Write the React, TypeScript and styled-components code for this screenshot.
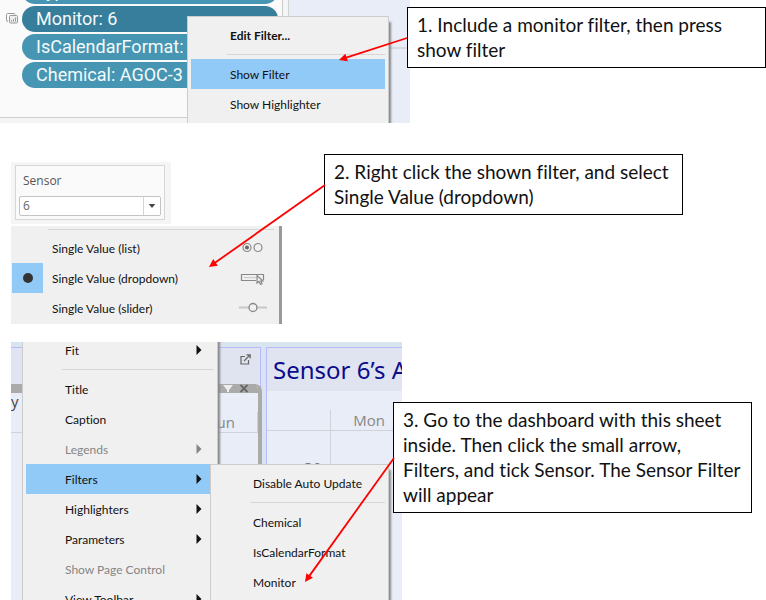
import React from 'react';
import styled, { createGlobalStyle } from 'styled-components';

const Global = createGlobalStyle`
  * { box-sizing: border-box; }
  body { margin: 0; background: #fff; color: #111; font-family: "Open Sans", "Noto Sans", sans-serif; font-variant-ligatures: none; }
  button { font: inherit; color: inherit; border: 0; margin: 0; padding: 0; background: none; text-align: left; }
`;

const Page = styled.main`
  display: grid;
  grid-template-rows: 123px 181px minmax(0, 1fr);
  row-gap: 19px;
  height: 100vh;
  overflow: hidden;
`;

const Step = styled.section<{ $indent?: number }>`
  position: relative;
  display: flex;
  align-items: flex-start;
  min-width: 0;
  padding-left: ${p => p.$indent ?? 0}px;
`;

const Callout = styled.p<{ $top: number; $gap: number }>`
  flex: 0 1 359px;
  margin: ${p => p.$top}px 0 0 ${p => p.$gap}px;
  padding: 4px 9px 5px;
  border: 1px solid #000;
  background: #fff;
  position: relative;
  font-family: Lato, sans-serif;
  font-size: 19px;
  line-height: 25px;
`;

const ArrowLayer = styled.svg`
  position: absolute;
  left: 0;
  top: 0;
  pointer-events: none;
  overflow: visible;
`;

function Arrow({ from, to }: { from: [number, number]; to: [number, number] }) {
  const angle = (Math.atan2(to[1] - from[1], to[0] - from[0]) * 180) / Math.PI;
  const len = Math.hypot(to[0] - from[0], to[1] - from[1]);
  return (
    <ArrowLayer width="1" height="1" aria-hidden="true">
      <g transform={`translate(${from[0]} ${from[1]}) rotate(${angle})`} fill="#f00">
        <path d={`M0 0H${len - 6}`} stroke="#f00" strokeWidth="1.8" />
        <path d={`M${len} 0l-8 -4v8z`} />
      </g>
    </ArrowLayer>
  );
}

/* Menus */
const MenuBox = styled.div`
  display: flex;
  flex-direction: column;
  padding: 3px;
  background: #f0f0f0;
  border: 1px solid #ccc;
  box-shadow: 3px 5px 2px -1px #888;
  font-family: Lato, sans-serif;
  font-size: 12px;
`;

const MenuItem = styled.button<{ $active?: boolean; $bold?: boolean }>`
  display: flex;
  flex: none;
  align-items: center;
  justify-content: space-between;
  height: 30px;
  padding: 0 9px 0 39px;
  background: ${p => (p.$active ? '#91c9f7' : 'transparent')};
  font-weight: ${p => (p.$bold ? 700 : 400)};
  white-space: nowrap;
  &:disabled { color: #858585; }
`;

const Rule = styled.hr`
  flex: none;
  width: auto;
  height: 1px;
  margin: 4px 0 4px 36px;
  border: 0;
  background: #d7d7d7;
`;

const Caret = () => (
  <svg width="6" height="10" viewBox="0 0 6 10" fill="currentColor" aria-hidden="true">
    <path d="M0.5 0L5.5 5L0.5 10z" />
  </svg>
);

/* Step 1 */
const ShelfShot = styled.div`
  position: relative;
  display: flex;
  flex: none;
  width: 410px;
  height: 123px;
  overflow: hidden;
  background: #e9edf7;
`;

const Shelf = styled.div`
  width: 289px;
  height: 123px;
  border-right: 1px solid #d2d2d2;
  background: #f5f5f5;
`;

const ShelfCard = styled.div`
  display: flex;
  gap: 4px;
  width: 283px;
  height: 118px;
  padding-left: 6px;
  border: solid #ccc;
  border-width: 0 1px 1px 0;
  background: #fafafa;
`;

const SheetsIcon = styled.svg`
  flex: none;
  margin-top: 13px;
`;

const Pills = styled.div`
  display: flex;
  flex: 1;
  flex-direction: column;
  gap: 2px;
  margin: -22px 4px 0 0;
`;

const Pill = styled.button<{ $selected?: boolean }>`
  flex: none;
  height: 26px;
  padding: 0 14px;
  overflow: hidden;
  border-radius: 13px;
  background: ${p => (p.$selected ? '#367e9b' : '#4696b3')};
  color: #f4fafc;
  font-family: Roboto, sans-serif;
  font-size: 18px;
  line-height: 26px;
  white-space: nowrap;
`;

const PlotEdge = styled.div`
  flex: 1;
  height: 49px;
  border-bottom: 2px solid #d7dae2;
`;

const FilterMenu = styled(MenuBox)`
  position: absolute;
  left: 187px;
  top: 16px;
  width: 202px;
  height: 120px;
`;

/* Step 2 */
const DropdownShot = styled.div`
  display: flex;
  flex: none;
  flex-direction: column;
  gap: 2px;
  width: 271px;
  margin-top: 20px;
`;

const FilterFrame = styled.div`
  width: 160px;
  height: 62px;
  padding: 3px 6px 4px 4px;
  background: #f5f5f5;
`;

const FilterCard = styled.div`
  display: flex;
  flex-direction: column;
  height: 55px;
  padding: 0 3px 3px;
  border: 1px solid #d6d6d6;
  background: #fafafa;
`;

const FilterLabel = styled.label`
  padding-left: 4px;
  color: #555;
  font-size: 12px;
  line-height: 30px;
`;

const SelectWrap = styled.div`
  display: grid;
  grid-template-columns: 1fr 17px;
  align-items: center;
  height: 20px;
  border: 1px solid #c4c4c4;
  border-radius: 2px;
  background: #fff;
`;

const Select = styled.select`
  grid-area: 1 / 1 / 2 / 3;
  width: 100%;
  height: 18px;
  padding: 0 3px;
  border: 0;
  appearance: none;
  background: transparent;
  color: #666;
  font: 12px/18px "Open Sans", sans-serif;
`;

const SelectCaret = styled.svg`
  grid-area: 1 / 2 / 2 / 3;
  width: 17px;
  height: 18px;
  border-left: 1px solid #d4d4d4;
  pointer-events: none;
`;

const ModeMenu = styled.div`
  display: flex;
  flex-direction: column;
  height: 98px;
  overflow: hidden;
  border-right: 3px solid #999;
  background: #f0f0f0;
  font-family: Lato, sans-serif;
  font-size: 12px;
`;

const ModeRule = styled(Rule)`
  margin: 3px 5px 3px 37px;
`;

const ModeItem = styled.button`
  display: grid;
  flex: none;
  grid-template-columns: 31px 1fr 28px;
  column-gap: 9px;
  align-items: center;
  height: 30px;
  padding: 0 12px 0 1px;
  white-space: nowrap;
`;

const Tick = styled.span<{ $on?: boolean }>`
  display: grid;
  place-items: center;
  height: 30px;
  background: ${p => (p.$on ? '#91c9f7' : 'transparent')};
  &::after {
    content: "";
    display: ${p => (p.$on ? 'block' : 'none')};
    width: 10px;
    height: 10px;
    border-radius: 50%;
    background: #333;
  }
`;

/* Step 3 */
const DashShot = styled.div`
  position: relative;
  display: flex;
  flex: none;
  gap: 5px;
  width: 391px;
  height: 100%;
  min-height: 0;
  padding-top: 5px;
  overflow: hidden;
  background: #d9e4f1;
`;

const Panel = styled.div<{ $width?: number }>`
  flex: ${p => (p.$width ? `0 0 ${p.$width}px` : '1')};
  min-width: 0;
  border: solid #b9b9fb;
  border-width: 1px ${p => (p.$width ? 1 : 0)}px 0 ${p => (p.$width ? 0 : 1)}px;
  background: #e9edf7;
`;

const PanelHead = styled.header<{ $height: number }>`
  display: flex;
  align-items: center;
  justify-content: flex-end;
  height: ${p => p.$height}px;
  padding-right: 9px;
  padding-bottom: 13px;
  background: #e0e4f0;
`;

const PanelTitle = styled.h2`
  height: 43px;
  margin: 0;
  padding-left: 6px;
  overflow: hidden;
  background: #e0e4f0;
  color: #0c0c8c;
  font: 400 24px/43px "Noto Sans", sans-serif;
  white-space: nowrap;
`;

const SheetFrame = styled.div`
  height: 300px;
  margin-right: -2px;
  overflow: hidden;
  border: solid #aaa;
  border-width: 0 4px 0 0;
  border-radius: 0 7px 0 0;
  background: #e9edf7;
`;

const SheetBar = styled.div`
  display: flex;
  justify-content: flex-end;
  gap: 7px;
  height: 9px;
  padding-right: 10px;
  background: #aaa;
`;

const SheetName = styled.div`
  height: 19px;
  color: #444;
  font-size: 15px;
  line-height: 16px;
`;

const DayRow = styled.div<{ $cols: string }>`
  display: grid;
  grid-template-columns: ${p => p.$cols};
  height: 21px;
  border-bottom: 1px solid #d0d2d8;
  color: #888;
  font-size: 15px;
  line-height: 20px;
`;

const Day = styled.div<{ $line?: boolean }>`
  padding-right: 22px;
  border-right: ${p => (p.$line ? '1px solid #d0d2d8' : '0')};
  text-align: right;
`;

const DateRow = styled.div`
  display: grid;
  grid-template-columns: 64px 1fr;
  height: 170px;
  color: #777;
  font-size: 16px;
`;

const DateCell = styled.div`
  padding: 27px 8px 0 0;
  border-right: 1px solid #d0d2d8;
  line-height: 22px;
  text-align: right;
`;

const SheetMenu = styled(MenuBox)`
  position: absolute;
  left: 11px;
  top: -11px;
  width: 196px;
  height: 320px;
  & > button { padding-right: 12px; }
`;

const ActiveRow = styled(MenuItem)`
  margin-right: 4px;
  && { padding-right: 8px; }
`;

const SubMenu = styled(MenuBox)`
  position: absolute;
  left: 199px;
  top: 122px;
  width: 179px;
  height: 200px;
`;

export default function App() {
  return (
    <Page>
      <Global />
      <Step>
        <ShelfShot>
          <Shelf>
            <ShelfCard>
              <SheetsIcon width="12" height="11" viewBox="0 0 12 11" fill="none" stroke="#999" aria-hidden="true">
                <rect x="3.5" y="2.5" width="8" height="7.5" rx="1" fill="#eee" />
                <path d="M2 8.5Q.5 8.5.5 7V1.5Q.5.5 1.5.5H8Q9 .5 9 1.5" />
                <path d="M5.5 8.5V7M7.5 8.5V6M9.5 8.5V4.500" />
              </SheetsIcon>
              <Pills>
                <Pill>Type</Pill>
                <Pill $selected>Monitor: 6</Pill>
                <Pill>IsCalendarFormat:</Pill>
                <Pill>Chemical: AGOC-3</Pill>
              </Pills>
            </ShelfCard>
          </Shelf>
          <PlotEdge />
          <FilterMenu>
            <MenuItem $bold>Edit Filter...</MenuItem>
            <Rule />
            <MenuItem $active>Show Filter</MenuItem>
            <MenuItem>Show Highlighter</MenuItem>
          </FilterMenu>
        </ShelfShot>
        <Callout $top={7} $gap={-3}>1. Include a monitor filter, then press show filter</Callout>
        <Arrow from={[407, 38]} to={[339, 60]} />
      </Step>

      <Step $indent={11}>
        <DropdownShot>
          <FilterFrame>
            <FilterCard>
              <FilterLabel htmlFor="sensor">Sensor</FilterLabel>
              <SelectWrap>
                <Select id="sensor" defaultValue="6"><option>6</option></Select>
                <SelectCaret viewBox="0 0 17 18" fill="#444" aria-hidden="true"><path d="M5 7h7l-3.500 4z" /></SelectCaret>
              </SelectWrap>
            </FilterCard>
          </FilterFrame>
          <ModeMenu>
            <ModeRule />
            <ModeItem>
              <Tick />Single Value (list)
              <svg width="28" height="14" viewBox="0 0 28 14" fill="none" stroke="#888" strokeWidth="1.200" aria-hidden="true">
                <circle cx="8" cy="6.500" r="4" /><circle cx="8" cy="6.500" r="2" fill="#666" stroke="none" /><circle cx="19" cy="6.500" r="4" />
              </svg>
            </ModeItem>
            <ModeItem>
              <Tick $on />Single Value (dropdown)
              <svg width="28" height="14" viewBox="0 0 28 14" fill="none" stroke="#888" strokeWidth="1.200" aria-hidden="true">
                <path d="M17 9.500H2.500V3.500H24.500V9" /><path d="M5 6.500H17" stroke="#ccc" />
                <path d="M18 4.500V12l2-1.500 1.500 3 1.500-1-1.200-2.500H24z" fill="#f0f0f0" />
              </svg>
            </ModeItem>
            <ModeItem>
              <Tick />Single Value (slider)
              <svg width="28" height="14" viewBox="0 0 28 14" fill="none" aria-hidden="true">
                <path d="M0 6.500H28" stroke="#c8c8c8" strokeWidth="2" /><circle cx="14" cy="6.500" r="4" fill="#f0f0f0" stroke="#888" strokeWidth="1.300" />
              </svg>
            </ModeItem>
          </ModeMenu>
        </DropdownShot>
        <Callout $top={12} $gap={42}>2. Right click the shown filter, and select Single Value (dropdown)</Callout>
        <Arrow from={[325, 43]} to={[209, 125]} />
      </Step>

      <Step $indent={11}>
        <DashShot>
          <Panel $width={250}>
            <PanelHead $height={36}>
              <svg width="11" height="11" viewBox="0 0 11 11" fill="none" stroke="#666" strokeWidth="1.200" aria-hidden="true">
                <path d="M5 2.500H1V10H8.500V6M4 7L10 1M6.500 .8H10.200V4.500" />
              </svg>
            </PanelHead>
            <SheetFrame>
              <SheetBar>
                <svg width="10" height="9" viewBox="0 0 10 9" fill="#eee" aria-hidden="true"><path d="M0 1H10L6 6V8H4V6z" /></svg>
                <svg width="8" height="9" viewBox="0 0 8 9" stroke="#666" strokeWidth="1.800" aria-hidden="true"><path d="M.5 1L7.500 8M7.500 1L.5 8" /></svg>
              </SheetBar>
              <SheetName>y</SheetName>
              <DayRow $cols="1fr"><Day $line>Sun</Day></DayRow>
            </SheetFrame>
          </Panel>
          <Panel>
            <PanelTitle>Sensor 6’s A</PanelTitle>
            <SheetName />
            <DayRow $cols="64px 76px"><Day $line /><Day>Mon</Day></DayRow>
            <DateRow><DateCell>30</DateCell></DateRow>
          </Panel>
          <SheetMenu>
            <MenuItem>Fit<Caret /></MenuItem>
            <Rule />
            <MenuItem>Title</MenuItem>
            <MenuItem>Caption</MenuItem>
            <MenuItem disabled>Legends<Caret /></MenuItem>
            <ActiveRow $active>Filters<Caret /></ActiveRow>
            <MenuItem>Highlighters<Caret /></MenuItem>
            <MenuItem>Parameters<Caret /></MenuItem>
            <MenuItem disabled>Show Page Control</MenuItem>
            <MenuItem>View Toolbar<Caret /></MenuItem>
          </SheetMenu>
          <SubMenu>
            <MenuItem>Disable Auto Update</MenuItem>
            <Rule />
            <MenuItem>Chemical</MenuItem>
            <MenuItem>IsCalendarFormat</MenuItem>
            <MenuItem>Monitor</MenuItem>
          </SubMenu>
        </DashShot>
        <Callout $top={60} $gap={-9}>
          3. Go to the dashboard with this sheet<br />
          inside. Then click the small arrow,<br />
          Filters, and tick Sensor. The Sensor Filter will appear
        </Callout>
        <Arrow from={[394, 116]} to={[305, 240]} />
      </Step>
    </Page>
  );
}
